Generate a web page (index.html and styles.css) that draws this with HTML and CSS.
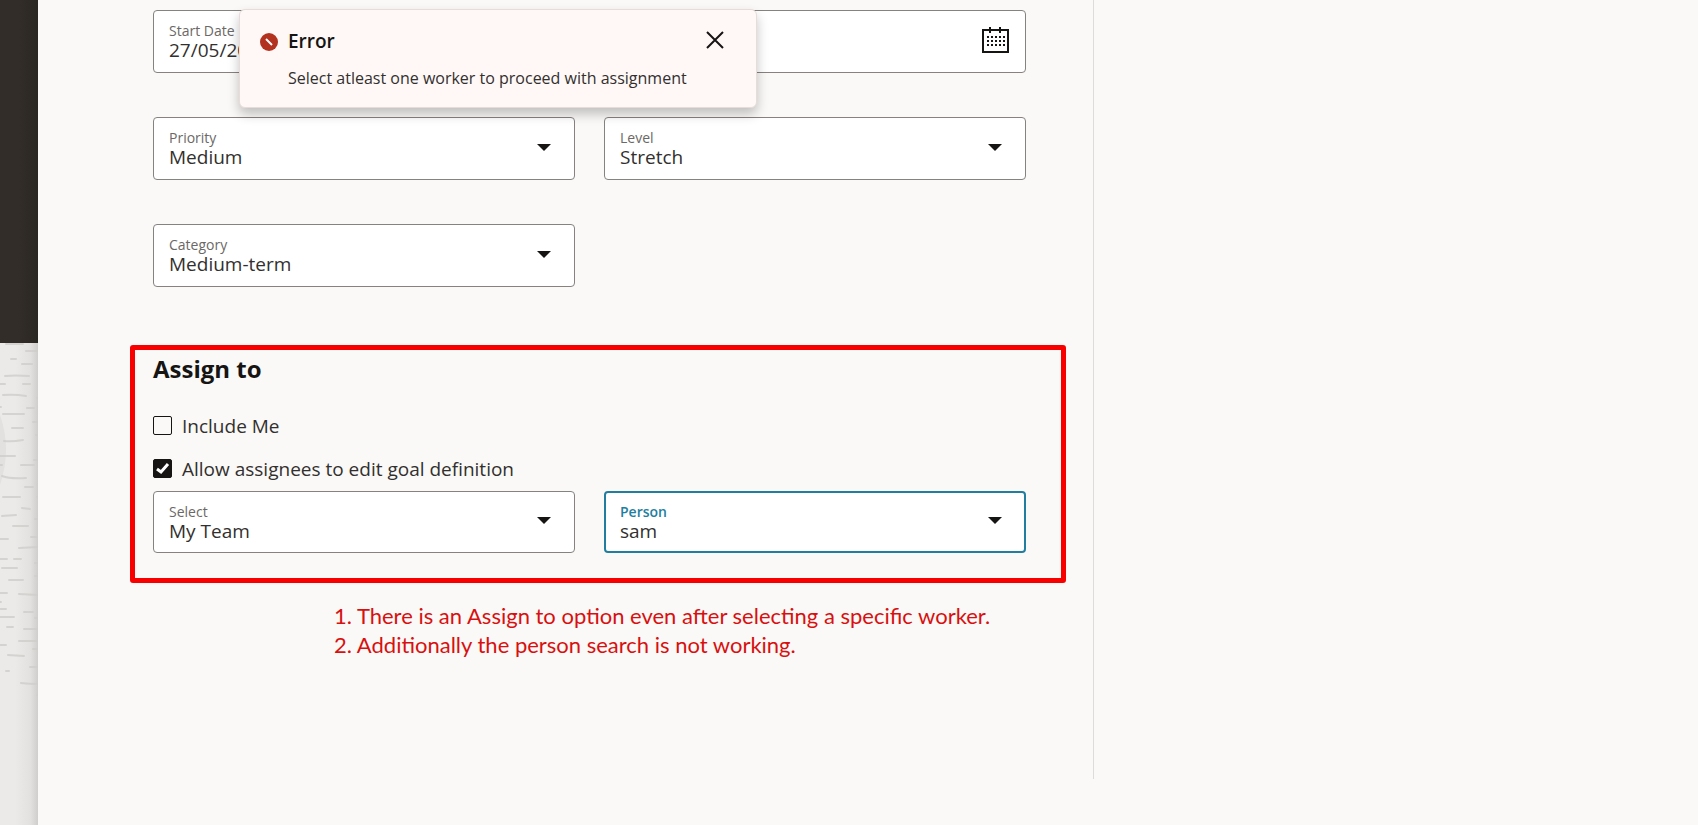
FILE: index.html
```html
<!DOCTYPE html>
<html lang="en">
<head>
<meta charset="utf-8">
<title>Add Goal</title>
<link rel="stylesheet" href="styles.css">
</head>
<body>
<div class="page">
  <div class="backdrop">
    <div class="backdrop-dark"></div>
    <svg class="backdrop-texture" width="38" height="482" viewBox="0 0 38 482" aria-hidden="true">
      <path d="M0 72q12 34 0 70z" fill="#e2e1df"/>
      <g stroke="#cfcdca" stroke-width="2" stroke-linecap="round" fill="none" opacity=".8">
        <path d="M6 1h17M26 8h12M11 16h5M22 21h10M5 33q10-1 24 0M0 41h5M23 41h7M3 52q12-1 23 1M37 55h1M27 65h7M0 64h1M3 71h21M33 79h5M12 85h11M36 92h2M4 98q8 1 19-1M0 113h15M34 117h4M21 122h13M0 122h2M2 133q8 3 24 2M25 144h8M3 154h17M37 154h1M22 165l8 1M2 173l14-1M35 176h3M13 183h15M31 194h7M0 196h8M19 205l19-1M0 216h7M14 216h7M35 220h3M2 225h15M35 233h3M9 237h14M0 250h7M19 251l19 1M0 259h1M0 266h6M24 269h9M0 274h14M35 275h3M7 284h6M24 286h14M19 298h19M0 302h6M33 306h5M8 312l16 1M30 324h8M6 328h3M21 340q8 1 17 1M37 352h1"/>
      </g>
    </svg>
  </div>

  <main class="drawer">
    <form class="form">
      <div class="row">
        <div class="field">
          <div class="field-text">
            <label class="label" for="start">Start Date</label>
            <input class="value" id="start" type="text" value="27/05/2024">
          </div>
        </div>
        <div class="field">
          <div class="field-text">
            <input class="value" id="end" type="text" aria-label="End date">
          </div>
          <button class="icon-button calendar" type="button" aria-label="Open calendar">
            <svg width="28" height="28" viewBox="0 0 28 28" fill="none" stroke="#161513">
              <path d="M2 4h25v22H2z" stroke-width="2"/>
              <path d="M9 1v6M19 1v6" stroke-width="2"/>
              <path d="M6 11h18M6 15h18M6 19h18" stroke-width="2" stroke-dasharray="2 2"/>
            </svg>
          </button>
        </div>
      </div>

      <div class="row">
        <div class="field">
          <div class="field-text">
            <label class="label" for="priority">Priority</label>
            <select class="value" id="priority"><option>Medium</option></select>
          </div>
          <svg class="arrow" width="14" height="7" viewBox="0 0 14 7" aria-hidden="true"><path d="M0 0h14L7 7z" fill="#161513"/></svg>
        </div>
        <div class="field">
          <div class="field-text">
            <label class="label" for="level">Level</label>
            <select class="value" id="level"><option>Stretch</option></select>
          </div>
          <svg class="arrow" width="14" height="7" viewBox="0 0 14 7" aria-hidden="true"><path d="M0 0h14L7 7z" fill="#161513"/></svg>
        </div>
      </div>

      <div class="row">
        <div class="field">
          <div class="field-text">
            <label class="label" for="category">Category</label>
            <select class="value" id="category"><option>Medium-term</option></select>
          </div>
          <svg class="arrow" width="14" height="7" viewBox="0 0 14 7" aria-hidden="true"><path d="M0 0h14L7 7z" fill="#161513"/></svg>
        </div>
      </div>

      <section class="assign">
        <h2 class="heading">Assign to</h2>
        <label class="check"><input class="checkbox" type="checkbox">Include Me</label>
        <label class="check"><input class="checkbox" type="checkbox" checked>Allow assignees to edit goal definition</label>
        <div class="row">
          <div class="field">
            <div class="field-text">
              <label class="label" for="team">Select</label>
              <select class="value" id="team"><option>My Team</option></select>
            </div>
            <svg class="arrow" width="14" height="7" viewBox="0 0 14 7" aria-hidden="true"><path d="M0 0h14L7 7z" fill="#161513"/></svg>
          </div>
          <div class="field field-active">
            <div class="field-text">
              <label class="label" for="person">Person</label>
              <input class="value" id="person" type="text" value="sam">
            </div>
            <svg class="arrow" width="14" height="7" viewBox="0 0 14 7" aria-hidden="true"><path d="M0 0h14L7 7z" fill="#161513"/></svg>
          </div>
        </div>
      </section>

      <div class="notes">
        <p class="note">1. There is an Assign to option even after selecting a specific worker.</p>
        <p class="note">2. Additionally the person search is not working.</p>
      </div>
    </form>

    <div class="toast" role="alert">
      <svg class="toast-icon" width="18" height="18" viewBox="0 0 18 18" aria-hidden="true">
        <circle cx="9" cy="9" r="9" fill="#b3311f"/>
        <path d="M6 6l6 6" stroke="#fff" stroke-width="2"/>
      </svg>
      <div class="toast-body">
        <h3 class="toast-title">Error</h3>
        <p class="toast-text">Select atleast one worker to proceed with assignment</p>
      </div>
      <button class="icon-button close" type="button" aria-label="Close">
        <svg width="18" height="18" viewBox="0 0 18 18" fill="none" stroke="#161513" stroke-width="2"><path d="M1 1l16 16M17 1L1 17"/></svg>
      </button>
    </div>
  </main>
</div>
</body>
</html>
```
FILE: styles.css
```css
* { box-sizing: border-box; }

body {
  margin: 0;
  background: #faf9f7;
  color: #161513;
  font-family: "Open Sans", "Noto Sans", sans-serif;
}

.page {
  display: flex;
  min-height: 100vh;
}

.backdrop {
  flex: 0 0 38px;
  background: linear-gradient(to right, #ebeae8 40%, #e2e1df 80%, #cfcecc);
}

.backdrop-dark {
  height: 343px;
  background: linear-gradient(to right, #322d29 50%, #2a2622);
}

.backdrop-texture { display: block; }

.drawer {
  position: relative;
  flex: 1;
  display: grid;
  grid-template-columns: 1056fr 604fr;
  align-items: start;
}

.form {
  padding: 10px 67px 120px 115px;
  border-right: 1px solid #dddcda;
}

.row {
  display: grid;
  grid-template-columns: 1fr 1fr;
  gap: 29px;
  margin-bottom: 44px;
}

.field {
  display: flex;
  align-items: center;
  height: 63px;
  padding: 0 23px 0 15px;
  border: 1px solid #85827f;
  border-radius: 4px;
  background: #fff;
}

.field-active {
  padding: 0 22px 0 14px;
  border: 2px solid #227e9e;
}

.field-text {
  flex: 1;
  display: flex;
  flex-direction: column;
}

.label {
  color: #6b6866;
  font-size: 14px;
  line-height: 17px;
}

.field-active .label {
  color: #227e9e;
  font-weight: 600;
}

.value {
  width: 100%;
  height: 22px;
  padding: 0;
  border: 0;
  outline: 0;
  appearance: none;
  background: transparent;
  color: #32302e;
  font-family: inherit;
  font-size: 19px;
  line-height: 22px;
}

.arrow { margin-bottom: 3px; }

.icon-button {
  display: flex;
  padding: 0;
  border: 0;
  background: none;
}

.calendar { margin: 0 -7px 3px 0; }

.assign {
  margin: 58px -40px 0 -23px;
  padding: 5px 35px 25px 18px;
  border: 5px solid #f80000;
  border-radius: 3px;
}

.assign .row { margin: 0; }
.assign .field { height: 62px; }

.heading {
  margin: 0 0 21px;
  font-size: 24px;
  line-height: 28px;
}

.check {
  display: flex;
  align-items: center;
  gap: 10px;
  height: 43px;
  color: #32302e;
  font-size: 19px;
}

.checkbox {
  width: 19px;
  height: 19px;
  margin: 0;
  border: 1px solid #161513;
  border-radius: 2px;
  appearance: none;
}

.checkbox:checked {
  background: #161513 url("data:image/svg+xml,%3Csvg xmlns='http://www.w3.org/2000/svg' viewBox='0 0 17 17'%3E%3Cpath d='M3 9l4 3 7-8' fill='none' stroke='white' stroke-width='3'/%3E%3C/svg%3E");
}

.assign .check + .row { margin-top: 1px; }

.notes { margin: 18px 0 0 181px; }

.note {
  margin: 0;
  color: #d8100f;
  font-family: Lato, sans-serif;
  font-size: 22px;
  line-height: 29px;
  white-space: nowrap;
}

.toast {
  position: absolute;
  top: 9px;
  left: 201px;
  display: flex;
  align-items: flex-start;
  width: 518px;
  padding: 19px 32px 17px 20px;
  border: 1px solid #e8dcda;
  border-radius: 6px;
  background: #fff8f7;
  box-shadow: 0 6px 12px rgba(0, 0, 0, .24);
}

.toast-icon { margin: 4px 10px 0 0; }
.toast-body { flex: 1; }

.toast-title {
  margin: 0 0 13px;
  font-size: 19px;
  font-weight: 600;
  line-height: 24px;
}

.toast-text {
  margin: 0;
  color: #32302e;
  font-size: 16px;
  line-height: 24px;
  white-space: nowrap;
}

.close { margin-top: 2px; }
```
